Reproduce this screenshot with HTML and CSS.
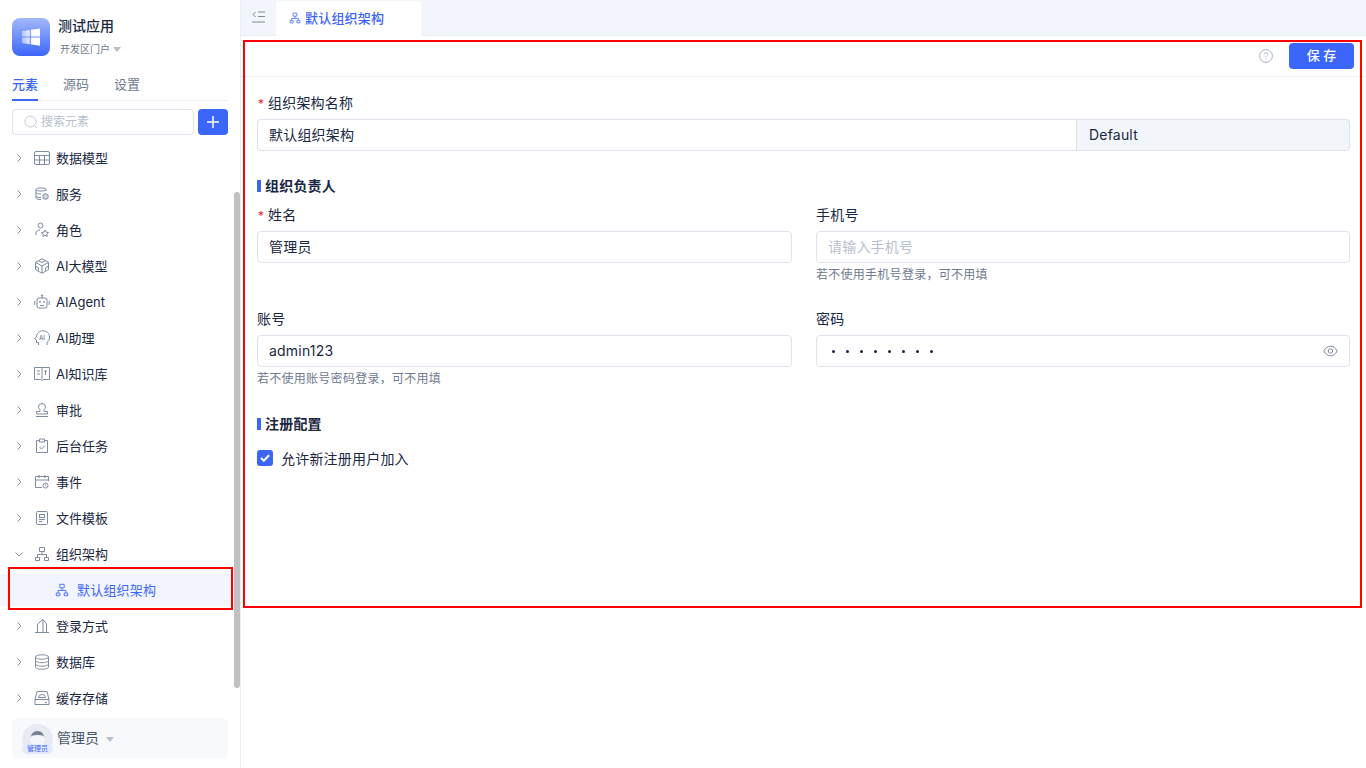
FILE: index.html
```html
<!DOCTYPE html>
<html lang="zh-CN">
<head>
<meta charset="utf-8">
<title>默认组织架构</title>
<link rel="stylesheet" href="styles.css">
</head>
<body>
<div class="app">
  <aside class="sidebar">
    <header class="brand">
      <div class="logo">
        <svg width="18" height="18" viewBox="0 0 20 20"><defs><linearGradient id="win" x1="0" x2="1" y1="0" y2="0"><stop offset="0" stop-color="#fff" stop-opacity=".45"/><stop offset=".6" stop-color="#fff"/></linearGradient></defs><path fill="url(#win)" d="M0 3.500 8.600 2.200v7.200H0zM9.800 2 20 .5v8.900H9.800zM0 10.600h8.600V18L0 16.700zM9.800 10.600H20v9l-10.200-1.500z"/></svg>
      </div>
      <div class="brand-text">
        <div class="brand-name">测试应用</div>
        <div class="brand-sub">开发区门户<span class="caret"></span></div>
      </div>
    </header>
    <nav class="tabs">
      <span class="tab active">元素</span><span class="tab">源码</span><span class="tab">设置</span>
    </nav>
    <div class="search-row">
      <div class="search">
        <svg width="14" height="14" viewBox="0 0 14 14" fill="none" stroke="#c3c9d6"><circle cx="6.500" cy="6.500" r="5.500"/><path d="m10.500 10.500 2.500 2.500"/></svg>
        <span>搜索元素</span>
      </div>
      <button class="add" aria-label="添加"><svg width="12" height="12" viewBox="0 0 12 12" stroke="#fff" stroke-width="1.500"><path d="M6 0v12M0 6h12"/></svg></button>
    </div>
    <div class="tree-wrap">
      <ul class="tree">
        <li class="row"><svg class="chev" viewBox="0 0 8 8"><path d="m2.500 0.500 3.500 3.500-3.500 3.500"/></svg><svg class="ico" viewBox="0 0 16 16"><rect x=".5" y="1.500" width="15" height="13" rx="1.500"/><path d="M.5 5.500h15M.5 10h15M5.500 5.500v9M10.500 5.500v9"/></svg><span>数据模型</span></li>
        <li class="row"><svg class="chev" viewBox="0 0 8 8"><path d="m2.500 0.500 3.500 3.500-3.500 3.500"/></svg><svg class="ico" viewBox="0 0 16 16"><path d="M12 5V3.500C12 2.500 10 2 7 2S2 2.500 2 3.500V12c0 1 2 1.500 5 1.500M2 6.500c0 1 2 1.500 5 1.500M2 10c0 1 2 1.500 5 1.500M2 3.500C2 4.500 4 5 7 5s5-.5 5-1.500"/><circle cx="11.500" cy="10.500" r="2.800" fill="#7f8aa3" fill-opacity=".35"/></svg><span>服务</span></li>
        <li class="row"><svg class="chev" viewBox="0 0 8 8"><path d="m2.500 0.500 3.500 3.500-3.500 3.500"/></svg><svg class="ico" viewBox="0 0 16 16"><circle cx="6.500" cy="3.500" r="2.500"/><path d="M2 13v-1.500C2 9.500 3.500 8 6 8"/><path d="m11 8 1.100 2.100 2.400.4-1.700 1.600.4 2.300-2.200-1.100-2.200 1.100.4-2.300-1.700-1.600 2.400-.4z"/></svg><span>角色</span></li>
        <li class="row"><svg class="chev" viewBox="0 0 8 8"><path d="m2.500 0.500 3.500 3.500-3.500 3.500"/></svg><svg class="ico" viewBox="0 0 16 16"><path d="M8 .8 14.500 4.400v7.200L8 15.200 1.500 11.600V4.400zM8 8 1.500 4.400M8 8l6.500-3.600M8 8v7.200M4.700 2.700 8 4.500l3.300-1.800M1.500 8l3 1.800V12.500M14.500 8l-3 1.800V12.500"/></svg><span>AI大模型</span></li>
        <li class="row"><svg class="chev" viewBox="0 0 8 8"><path d="m2.500 0.500 3.500 3.500-3.500 3.500"/></svg><svg class="ico" viewBox="0 0 16 16"><rect x="3" y="4" width="10" height="10" rx="2"/><path d="M8 4V1.500M.8 7v4M15.200 7v4M6 11.500h4"/><circle cx="8" cy="1.500" r=".7"/><circle cx="6" cy="8" r=".6"/><circle cx="10" cy="8" r=".6"/></svg><span class="latin">AIAgent</span></li>
        <li class="row"><svg class="chev" viewBox="0 0 8 8"><path d="m2.500 0.500 3.500 3.500-3.500 3.500"/></svg><svg class="ico" viewBox="0 0 16 16"><path d="M4.500 15v-2.500H2.500V10L.5 8.500l2-1.500C2.500 3.500 5 .8 8.800.8s6.700 2.700 6.700 6.200c0 2.800-1.200 4.600-2.500 5.500V15"/><text x="5" y="10.200" class="ico-ai">AI</text></svg><span>AI助理</span></li>
        <li class="row"><svg class="chev" viewBox="0 0 8 8"><path d="m2.500 0.500 3.500 3.500-3.500 3.500"/></svg><svg class="ico" viewBox="0 0 16 16"><path d="M.5 1.500h15v12H9L8 14.500 7 13.500H.5zM8 1.500v12M3 5h3M3 8h3M10 5h3M11.500 5v4"/></svg><span>AI知识库</span></li>
        <li class="row"><svg class="chev" viewBox="0 0 8 8"><path d="m2.500 0.500 3.500 3.500-3.500 3.500"/></svg><svg class="ico" viewBox="0 0 16 16"><path d="M2 14.500h12M2.500 12h11V9.500H10V7.500c1-.5 1.500-1.500 1.500-2.500a3.500 3.500 0 0 0-7 0c0 1 .5 2 1.500 2.500v2H2.500z"/></svg><span>审批</span></li>
        <li class="row"><svg class="chev" viewBox="0 0 8 8"><path d="m2.500 0.500 3.500 3.500-3.500 3.500"/></svg><svg class="ico" viewBox="0 0 16 16"><path d="M5.500 2.500h-3v12h11v-12h-3M5.500 1h5v3h-5zM5.500 9l2 2 3.500-3.500"/></svg><span>后台任务</span></li>
        <li class="row"><svg class="chev" viewBox="0 0 8 8"><path d="m2.500 0.500 3.500 3.500-3.500 3.500"/></svg><svg class="ico" viewBox="0 0 16 16"><path d="M8 13.500H1.500v-11h13V7M1.500 6h13M5 1v3M11 1v3"/><circle cx="11.500" cy="11.500" r="2.500"/><path d="M11.500 10.300v1.200l.8.600"/></svg><span>事件</span></li>
        <li class="row"><svg class="chev" viewBox="0 0 8 8"><path d="m2.500 0.500 3.500 3.500-3.500 3.500"/></svg><svg class="ico" viewBox="0 0 16 16"><rect x="2.500" y="1.500" width="11" height="13" rx="1"/><rect x="5.500" y="4.500" width="5" height="3"/><path d="M5 9.500h6M5 11.500h3"/></svg><span>文件模板</span></li>
        <li class="row"><svg class="chev" viewBox="0 0 8 8"><path d="m0.500 2.500 3.500 3.500 3.500-3.500"/></svg><svg class="ico" viewBox="0 0 16 16"><use href="#org"/></svg><span>组织架构</span></li>
        <li class="row child"><svg class="ico" viewBox="0 0 16 16"><path id="org" d="M5.500 1.500h5v4h-5zM8 5.500v3M3.500 11.500v-3h9v3M1.500 11.500h4v3h-4zM10.500 11.500h4v3h-4z"/></svg><span>默认组织架构</span></li>
        <li class="row"><svg class="chev" viewBox="0 0 8 8"><path d="m2.500 0.500 3.500 3.500-3.500 3.500"/></svg><svg class="ico" viewBox="0 0 16 16"><path d="M1 14.500h14M3.500 14.500V6L9 1.500 12.500 6v8.500M9 1.500v13"/></svg><span>登录方式</span></li>
        <li class="row"><svg class="chev" viewBox="0 0 8 8"><path d="m2.500 0.500 3.500 3.500-3.500 3.500"/></svg><svg class="ico" viewBox="0 0 16 16"><ellipse cx="8" cy="3" rx="6.500" ry="2.200"/><path d="M1.500 3v10c0 1.200 3 2.200 6.500 2.200s6.500-1 6.500-2.200V3M1.500 6.500c0 1.200 3 2.200 6.500 2.200s6.500-1 6.500-2.200M1.500 10c0 1.200 3 2.200 6.500 2.200s6.500-1 6.500-2.200"/></svg><span>数据库</span></li>
        <li class="row"><svg class="chev" viewBox="0 0 8 8"><path d="m2.500 0.500 3.500 3.500-3.500 3.500"/></svg><svg class="ico" viewBox="0 0 16 16"><path d="M1 9.500v5h14v-5L13 1.500H3zM1 9.500h14M4.500 7.500a3.500 3 0 0 1 7 0z"/><path d="M11 12.500h2"/></svg><span>缓存存储</span></li>
      </ul>
    </div>
    <div class="thumb"></div>
    <footer class="user">
      <div class="avatar">
        <span class="hair"></span>
        <span class="badge">管理员</span>
      </div>
      <span class="user-name">管理员</span><span class="caret big"></span>
    </footer>
  </aside>
  <main class="main">
    <div class="tabbar">
      <svg class="collapse" width="13" height="12" viewBox="0 0 13 12" fill="none" stroke="#7f8798"><path d="M3.500 1 1 3.500 3.500 6M6 1h7M6 5.500h7M0 11h13"/></svg>
      <div class="doc-tab"><svg class="ico small" viewBox="0 0 16 16"><use href="#org"/></svg>默认组织架构</div>
    </div>
    <div class="toolbar">
      <svg width="14" height="14" viewBox="0 0 14 14" fill="none" stroke="#a9b2c3"><circle cx="7" cy="7" r="6.400"/><path d="M5.200 5.500c0-1 .8-1.700 1.800-1.700s1.800.7 1.800 1.600c0 1.300-1.800 1.400-1.800 2.900"/><path d="M7 9.600v1"/></svg>
      <button class="save"><span>保 存</span></button>
    </div>
    <form class="form">
      <div class="field">
        <label class="label"><i class="req">*</i>组织架构名称</label>
        <div class="group">
          <div class="input grow-in">默认组织架构</div>
          <div class="addon">Default</div>
        </div>
      </div>
      <h3 class="section first">组织负责人</h3>
      <div class="cols">
        <div class="field">
          <label class="label"><i class="req">*</i>姓名</label>
          <div class="input">管理员</div>
        </div>
        <div class="field">
          <label class="label">手机号</label>
          <div class="input placeholder">请输入手机号</div>
          <p class="help">若不使用手机号登录，可不用填</p>
        </div>
        <div class="field">
          <label class="label">账号</label>
          <div class="input">admin123</div>
          <p class="help">若不使用账号密码登录，可不用填</p>
        </div>
        <div class="field">
          <label class="label">密码</label>
          <div class="input password">
            <span class="dots"><b></b><b></b><b></b><b></b><b></b><b></b><b></b><b></b></span>
            <svg width="15" height="12" viewBox="0 0 15 12" fill="none" stroke="#7f8798"><path d="M.8 6C2.500 2.800 4.800 1.200 7.500 1.200S12.500 2.800 14.200 6c-1.700 3.200-4 4.800-6.700 4.800S2.500 9.200.8 6z"/><circle cx="7.500" cy="6" r="2.200"/></svg>
          </div>
        </div>
      </div>
      <h3 class="section second">注册配置</h3>
      <label class="check">
        <span class="box"><svg width="10" height="8" viewBox="0 0 10 8" fill="none" stroke="#fff" stroke-width="2"><path d="M1 4l2.800 2.700L9 1.200"/></svg></span>
        允许新注册用户加入
      </label>
    </form>
  </main>
</div>
<div class="mark mark-tree"></div>
<div class="mark mark-form"></div>
</body>
</html>
```
FILE: styles.css
```css
* { box-sizing: border-box; }
html, body { margin: 0; height: 100%; overflow: hidden; }
body {
  font-family: Inter, "Noto Sans CJK SC", sans-serif;
  font-size: 13px;
  color: #1a2742;
  background: #fff;
}
.app { display: flex; height: 768px; }

.sidebar {
  position: relative;
  width: 241px;
  flex: none;
  border-right: 1px solid #eceef5;
  display: flex;
  flex-direction: column;
  padding-top: 18px;
}
.brand { display: flex; gap: 8px; padding-left: 12px; height: 38px; }
.logo {
  width: 38px; height: 38px; border-radius: 8px;
  background: linear-gradient(180deg, #a3b8fb 0%, #3c66fa 100%);
  display: flex; align-items: center; justify-content: center;
}
.brand-text { display: flex; flex-direction: column; }
.brand-name { font-size: 14px; line-height: 16px; margin-top: 0; font-weight: 500; color: #1a2742; }
.brand-sub { font-size: 10px; line-height: 14px; margin-top: 8px; margin-left: 2px; color: #6f7a90; display: flex; align-items: center; }
.caret {
  width: 0; height: 0; margin-left: 3px; margin-top: 1px;
  border-left: 4px solid transparent; border-right: 4px solid transparent;
  border-top: 5px solid #b8bfce;
}
.caret.big { margin-left: 7px; margin-top: 2px; }

.tabs {
  margin: 20px 12px 0;
  display: flex; gap: 25px;
  height: 25px;
  border-bottom: 1px solid #eceef5;
}
.tab { line-height: 17px; height: 25px; color: #6f7a90; font-size: 13px; width: 26px; }
.tab.active { color: #3c66fa; border-bottom: 2px solid #3c66fa; font-weight: 500; }

.search-row { display: flex; gap: 4px; margin: 8px 12px 0; height: 26px; }
.search {
  flex: 1;
  border: 1px solid #dfe2ec; border-radius: 4px;
  display: flex; align-items: center; gap: 3px; padding-left: 11px;
  font-size: 12px; color: #b8bfce;
}
.search span { margin-top: -3px; }
.add {
  width: 30px; height: 26px; padding: 0; border: 0; border-radius: 4px; background: #3c66fa;
  display: flex; align-items: center; justify-content: center;
}

.tree-wrap { margin-top: 5px; height: 576px; overflow: hidden; }
.tree { list-style: none; margin: 0; padding: 0 8px 0 0; }
.row { height: 36px; display: flex; align-items: center; padding-left: 15px; font-size: 13px; color: #1a2742; }
.row span { margin-top: -2px; }
.row span.latin { margin-top: 0; }
.chev { width: 8px; height: 8px; fill: none; stroke: #7f8aa3; flex: none; margin-right: 11px; }
.ico { width: 16px; height: 16px; fill: none; stroke: #7f8aa3; stroke-width: 1; flex: none; margin-right: 6px; }
.ico-ai { font-size: 6px; fill: #7f8aa3; stroke: none; font-weight: 600; }
.row.child {
  padding-left: 55px;
  height: 32px; margin: 2px 0;
  background: #f2f5fd; color: #3c66fa; letter-spacing: .2px;
}
.row.child .ico { width: 14px; height: 14px; stroke: #3c66fa; margin-right: 8px; }

.thumb {
  position: absolute; right: 0; top: 192px;
  width: 6px; height: 496px; border-radius: 3px; background: #c1c1c1;
}
.user {
  margin: 2px 12px 0; height: 40px; border-radius: 6px; background: #f8f9fc;
  display: flex; align-items: center; padding-left: 10px; flex: none;
}
.avatar {
  position: relative; width: 31px; height: 30px; border-radius: 50%;
  background: #e8ebf2; margin-right: 4px; margin-top: 1px; flex: none;
}
.hair {
  position: absolute; left: 9px; top: 7px; width: 13px; height: 14px;
  border-radius: 6px 6px 3px 3px; background: #f4f5f9;
  border-top: 4px solid #7a8296;
}
.badge {
  position: absolute; left: 0; bottom: 0; width: 31px; height: 10px; border-radius: 5px;
  background: #e4e9fd; color: #3c66fa; font-size: 7px; line-height: 9px; text-align: center;
}
.user-name { font-size: 14px; color: #4a5468; margin-top: -2px; }

.main { flex: 1; min-width: 0; display: flex; flex-direction: column; }
.tabbar {
  height: 36px; background: #f2f5fc; border-bottom: 1px solid #eceef5;
  display: flex; align-items: flex-start; padding-left: 35px; position: relative; flex: none;
}
.collapse { position: absolute; left: 11px; top: 11px; }
.doc-tab {
  width: 145px; height: 35px; background: #fff; border-radius: 4px 4px 0 0; margin-top: 1px;
  display: flex; align-items: center; padding-left: 13px; padding-bottom: 2px;
  font-size: 13px; font-weight: 500; color: #3c66fa; letter-spacing: .2px;
}
.ico.small { width: 12px; height: 12px; stroke: #3c66fa; margin-right: 4px; }
.toolbar {
  height: 41px; border-bottom: 1px solid #eceef5; flex: none;
  display: flex; align-items: center; justify-content: flex-end; gap: 16px; padding-right: 12px;
}
.save {
  width: 65px; height: 26px; border: 0; border-radius: 4px; background: #3c66fa; color: #fff;
  font-family: inherit; font-size: 13px; font-weight: 500; padding: 0 0 2px; margin-top: -1px; white-space: pre;
}

.form { padding: 16px 16px 0; font-size: 14px; letter-spacing: .2px; }
.field { min-width: 0; }
.label { display: block; height: 20px; line-height: 20px; margin-bottom: 6px; font-size: 14px; color: #1a2742; }
.req { font-style: normal; color: #f5222d; font-size: 12px; display: inline-block; width: 11px; padding-left: 1px; }
.input {
  height: 32px; border: 1px solid #dfe2ec; border-radius: 4px; padding: 0 11px 2px;
  display: flex; align-items: center; font-size: 14px; color: #1a2742;
}
.placeholder { color: #b8bfce; }
.group { display: flex; }
.grow-in { flex: 1; border-radius: 4px 0 0 4px; border-right: 0; }
.addon {
  width: 274px; height: 32px; border: 1px solid #dfe2ec; border-radius: 0 4px 4px 0;
  background: #f2f5fa; display: flex; align-items: center; padding: 0 0 2px 12px; font-size: 14px;
}
.help { margin: 4px 0 0; font-size: 12px; letter-spacing: .27px; line-height: 16px; color: #6f7a90; }
.cols { display: grid; grid-template-columns: 535px 534px; column-gap: 24px; grid-template-rows: 104px auto; }
.section {
  margin: 0; font-size: 14px; font-weight: 600; line-height: 20px; height: 20px;
  padding-left: 8px; position: relative; color: #1a2742;
}
.section::before {
  content: ""; position: absolute; left: 0; top: 4px; width: 4px; height: 12px; background: #3c66fa;
}
.section.first { margin-top: 25px; margin-bottom: 9px; }
.section.second { margin-top: 27px; }
.password { justify-content: space-between; padding: 0 11px 0 15px; }
.dots { display: flex; gap: 11px; }
.dots b { width: 3px; height: 3px; border-radius: 50%; background: #1a2742; }
.check { display: flex; align-items: center; gap: 8px; margin-top: 14px; height: 20px; font-size: 14px; }
.box {
  width: 16px; height: 16px; border-radius: 3px; background: #3c66fa;
  display: flex; align-items: center; justify-content: center;
}

.mark { position: absolute; border: 2px solid #f00; pointer-events: none; }
.mark-tree { left: 8px; top: 567px; width: 225px; height: 43px; }
.mark-form { left: 243px; top: 40px; width: 1119px; height: 568px; }
```
